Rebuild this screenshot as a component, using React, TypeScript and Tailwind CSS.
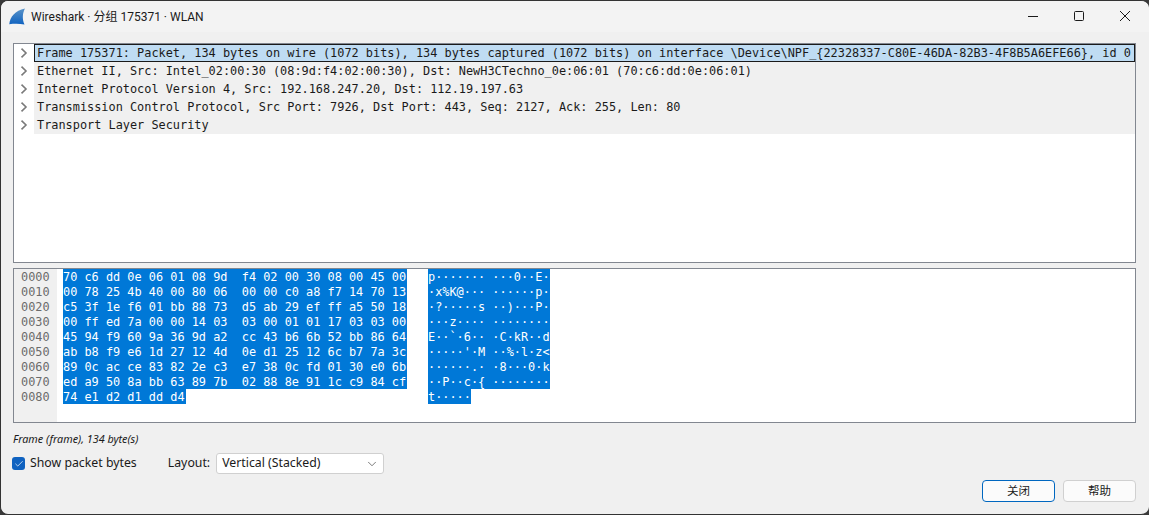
import React from 'react';
import { ChevronDown, Check } from 'lucide-react';

const treeRows = [
  'Frame 175371: Packet, 134 bytes on wire (1072 bits), 134 bytes captured (1072 bits) on interface \\Device\\NPF_{22328337-C80E-46DA-82B3-4F8B5A6EFE66}, id 0',
  'Ethernet II, Src: Intel_02:00:30 (08:9d:f4:02:00:30), Dst: NewH3CTechno_0e:06:01 (70:c6:dd:0e:06:01)',
  'Internet Protocol Version 4, Src: 192.168.247.20, Dst: 112.19.197.63',
  'Transmission Control Protocol, Src Port: 7926, Dst Port: 443, Seq: 2127, Ack: 255, Len: 80',
  'Transport Layer Security',
];

const hexRows = [
  ['0000', '70 c6 dd 0e 06 01 08 9d  f4 02 00 30 08 00 45 00', 'p······· ···0··E·'],
  ['0010', '00 78 25 4b 40 00 80 06  00 00 c0 a8 f7 14 70 13', '·x%K@··· ······p·'],
  ['0020', 'c5 3f 1e f6 01 bb 88 73  d5 ab 29 ef ff a5 50 18', '·?·····s ··)···P·'],
  ['0030', '00 ff ed 7a 00 00 14 03  03 00 01 01 17 03 03 00', '···z···· ········'],
  ['0040', '45 94 f9 60 9a 36 9d a2  cc 43 b6 6b 52 bb 86 64', 'E··`·6·· ·C·kR··d'],
  ['0050', 'ab b8 f9 e6 1d 27 12 4d  0e d1 25 12 6c b7 7a 3c', "·····'·M ··%·l·z<"],
  ['0060', '89 0c ac ce 83 82 2e c3  e7 38 0c fd 01 30 e0 6b', '······.· ·8···0·k'],
  ['0070', 'ed a9 50 8a bb 63 89 7b  02 88 8e 91 1c c9 84 cf', '··P··c·{ ········'],
  ['0080', '74 e1 d2 d1 dd d4', 't·····'],
];

function Chevron() {
  return (
    <svg width="8" height="10" viewBox="0 0 8 10" className="shrink-0">
      <path d="M1.5 0.6 L6 5 L1.5 9.4" fill="none" stroke="#7a7a7a" strokeWidth="1.6" />
    </svg>
  );
}

function TitleBar() {
  return (
    <div className="h-[31px] flex items-center bg-[#f3f3f3] shrink-0">
      <svg width="17" height="17" viewBox="0 0 17 17" className="ml-[8px] mr-[5px] mb-[1px]">
        <defs>
          <linearGradient id="fin" x1="0" y1="0" x2="0" y2="1">
            <stop offset="0" stopColor="#5a93c8" />
            <stop offset="1" stopColor="#0f62c0" />
          </linearGradient>
        </defs>
        <path d="M0.3 16.2 C1 9 6 2.5 16 0.5 C13.5 5 13 11 15.5 16.5 C11 15.6 5 15.6 0.3 16.2 Z" fill="url(#fin)" />
      </svg>
      <span className="font-['Roboto','Noto_Sans_CJK_SC',sans-serif] text-[12px] text-[#1a1a1a]">Wireshark · 分组 175371 · WLAN</span>
      <div className="ml-auto flex items-center h-full pr-[1px] pb-[2px]">
        <div className="w-[46px] flex justify-center">
          <svg width="10" height="10" viewBox="0 0 10 10"><path d="M0 5.5 H10" stroke="#1a1a1a" strokeWidth="1" /></svg>
        </div>
        <div className="w-[46px] flex justify-center">
          <svg width="10" height="10" viewBox="0 0 10 10"><rect x="0.5" y="0.5" width="9" height="9" rx="1" fill="none" stroke="#1a1a1a" /></svg>
        </div>
        <div className="w-[46px] flex justify-center">
          <svg width="10" height="10" viewBox="0 0 10 10"><path d="M0 0 L10 10 M10 0 L0 10" stroke="#1a1a1a" strokeWidth="1" /></svg>
        </div>
      </div>
    </div>
  );
}

function TreePane() {
  return (
    <div className="h-[220px] border border-[#828790] bg-white shrink-0 font-['DejaVu_Sans_Mono',monospace] text-[11.88px] text-[#1a1a1a] overflow-hidden">
      {treeRows.map((r, i) => (
        <div key={i} className="flex h-[18px] items-center">
          <div className="w-[20px] h-full flex items-center pl-[6px] shrink-0">
            <Chevron />
          </div>
          <div className={i === 0
            ? 'flex-1 h-full bg-[#bfdcf3] border border-[#1a1a1a] pl-[2px] pt-[1px] flex items-center whitespace-pre'
            : 'flex-1 h-full bg-[#f0f0f0] pl-[3px] pt-[2px] flex items-center whitespace-pre'}>
            {r}
          </div>
        </div>
      ))}
    </div>
  );
}

function HexPane() {
  return (
    <div className="h-[155px] mt-[5px] border border-[#828790] bg-white shrink-0 flex font-['DejaVu_Sans_Mono',monospace] text-[11.88px] overflow-hidden">
      <div className="w-[43px] bg-[#f0f0f0] shrink-0 pl-[7px] text-[#6b6b6b]">
        {hexRows.map((r) => <div key={r[0]} className="h-[15px] leading-[16px]">{r[0]}</div>)}
      </div>
      <div className="pl-[6px] flex-1">
        {hexRows.map((r) => (
          <div key={r[0]} className="h-[15px] leading-[16px] flex text-white">
            <div className="w-[365px] shrink-0">
              <span className="bg-[#0078d7] inline-block h-[15px] pr-[1px] whitespace-pre">{r[1]}</span>
            </div>
            <span className="bg-[#0078d7] inline-block h-[15px] whitespace-pre">{r[2]}</span>
          </div>
        ))}
      </div>
    </div>
  );
}

function Controls() {
  return (
    <div className="flex-1 flex flex-col font-['Noto_Sans','Noto_Sans_CJK_SC',sans-serif] text-[#1a1a1a]">
      <div className="mt-[8px] h-[15px] text-[10.8px] italic leading-[15px]">Frame (frame), 134 byte(s)</div>
      <div className="mt-[7px] flex items-center h-[21px] text-[12.3px]">
        <div className="w-[13px] h-[13px] ml-[-1px] rounded-[3px] bg-[#0f62c0] flex items-center justify-center">
          <Check size={10} color="#dbe8f6" strokeWidth={2} />
        </div>
        <span className="ml-[5px]">Show packet bytes</span>
        <span className="ml-[31px]">Layout:</span>
        <div className="ml-[6px] w-[168px] h-[21px] bg-white border border-[#d0d0d0] rounded-[3px] flex items-center justify-between pl-[5px] pr-[4px]">
          <span>Vertical (Stacked)</span>
          <ChevronDown size={14} color="#444" strokeWidth={1.2} />
        </div>
      </div>
      <div className="mt-[6px] flex justify-end gap-[8px] text-[11.5px]">
        <div className="w-[73px] h-[22px] bg-[#fbfbfb] border border-[#0067c0] rounded-[4px] flex items-center justify-center">关闭</div>
        <div className="w-[73px] h-[22px] bg-[#fbfbfb] border border-[#d0d0d0] rounded-[4px] flex items-center justify-center">帮助</div>
      </div>
    </div>
  );
}

export default function App() {
  return (
    <div className="w-[1149px] h-[515px] bg-[#3a3a3a] overflow-hidden">
      <div className="w-full h-full bg-[#f0f0f0] border-t border-l border-b border-[#333333] rounded-[8px] flex flex-col overflow-hidden">
        <TitleBar />
        <div className="flex-1 flex flex-col pt-[11px] pl-[12px] pr-[13px]">
          <TreePane />
          <HexPane />
          <Controls />
        </div>
      </div>
    </div>
  );
}
